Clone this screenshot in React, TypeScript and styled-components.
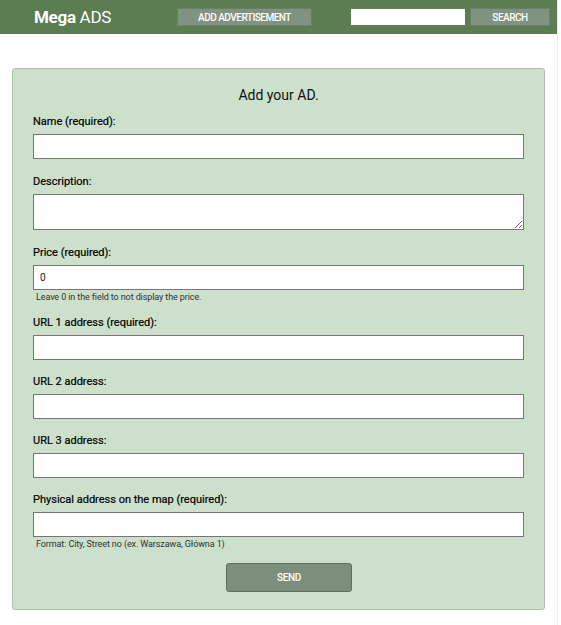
import React from "react";
import styled, { createGlobalStyle } from "styled-components";

const Global = createGlobalStyle`
  html, body { margin: 0; padding: 0; background: #fff; }
  body { font-family: Roboto, "Liberation Sans", Arial, sans-serif; }
  * { box-sizing: border-box; }
`;

const Page = styled.div`
  width: 558px;
  min-height: 625px;
  border-right: 1px solid #ededed;
`;

const Header = styled.header`
  height: 34px;
  background: #5c7c51;
  display: flex;
  align-items: center;
`;

const Logo = styled.div`
  margin-left: 34px;
  font-size: 17px;
  color: #fff;
  letter-spacing: -0.3px;
  width: 143px;
  b { font-weight: 700; }
`;

const HeaderButton = styled.button<{ $w: number; $ml: number }>`
  margin-left: ${(p) => p.$ml}px;
  width: ${(p) => p.$w}px;
  height: 18px;
  padding: 0;
  background: #7f9380;
  border: 1px solid #6c7f6b;
  color: #fff;
  font-family: Roboto, "Liberation Sans", sans-serif;
  font-size: 10px;
  font-weight: 500;
  letter-spacing: -0.5px;
  cursor: pointer;
`;

const SearchInput = styled.input`
  margin-left: 39px;
  width: 114px;
  height: 16px;
  border: none;
  background: #fff;
  padding: 0 4px;
`;

const Panel = styled.main`
  margin: 34px 12px 0 12px;
  width: 533px;
  background: #cde0cc;
  border: 1px solid #b3bcb2;
  border-radius: 3px;
  padding: 18px 20px 17px 20px;
  display: flex;
  flex-direction: column;
`;

const Title = styled.h1`
  margin: 0 0 11px 0;
  font-size: 14px;
  line-height: 17px;
  font-weight: 400;
  color: #111;
  text-align: center;
`;

const Field = styled.div<{ $gap: number }>`
  display: flex;
  flex-direction: column;
  margin-bottom: ${(p) => p.$gap}px;
`;

const Label = styled.label`
  font-size: 11px;
  line-height: 14px;
  font-weight: 400;
  color: #000;
  margin-bottom: 5px;
  -webkit-text-stroke: 0.2px #000;
`;

const TextInput = styled.input`
  width: 491px;
  height: 25px;
  border: 1px solid #767676;
  background: #fff;
  padding: 0 6px;
  font-family: Roboto, "Liberation Sans", sans-serif;
  font-size: 10px;
  color: #222;
  outline: none;
`;

const TextArea = styled.textarea`
  width: 491px;
  height: 36px;
  border: 1px solid #767676;
  background: #fff;
  padding: 4px 6px;
  font-family: Roboto, "Liberation Sans", sans-serif;
  font-size: 10px;
  display: block;
  outline: none;
`;

const Hint = styled.small`
  display: block;
  margin: 2px 0 -10px 3px;
  font-size: 9px;
  line-height: 10px;
  color: #333;
  letter-spacing: -0.1px;
`;

const SendButton = styled.button`
  margin-left: 193px;
  margin-top: -1px;
  align-self: flex-start;
  width: 126px;
  height: 29px;
  background: #7c8f7c;
  border: 1px solid #5e705e;
  border-radius: 3px;
  color: #fff;
  font-family: Roboto, "Liberation Sans", sans-serif;
  font-size: 10px;
  font-weight: 500;
  letter-spacing: -0.3px;
  cursor: pointer;
`;

type FieldDef = { label: string; hint?: string; value?: string; area?: boolean; gap: number };

const fields: FieldDef[] = [
  { label: "Name (required):", gap: 16 },
  { label: "Description:", area: true, gap: 16 },
  { label: "Price (required):", value: "0", hint: "Leave 0 in the field to not display the price.", gap: 24 },
  { label: "URL 1 address (required):", gap: 15 },
  { label: "URL 2 address:", gap: 15 },
  { label: "URL 3 address:", gap: 15 },
  { label: "Physical address on the map (required):", hint: "Format: City, Street no (ex. Warszawa, Główna 1)", gap: 25 },
];

export default function App() {
  return (
    <Page>
      <Global />
      <Header>
        <Logo>
          <b>Mega</b> ADS
        </Logo>
        <HeaderButton $w={135} $ml={0}>ADD ADVERTISEMENT</HeaderButton>
        <SearchInput />
        <HeaderButton $w={80} $ml={5}>SEARCH</HeaderButton>
      </Header>
      <Panel>
        <Title>Add your AD.</Title>
        {fields.map((f, i) => (
          <Field key={i} $gap={f.gap}>
            <Label>{f.label}</Label>
            {f.area ? <TextArea /> : <TextInput defaultValue={f.value} />}
            {f.hint && <Hint>{f.hint}</Hint>}
          </Field>
        ))}
        <SendButton>SEND</SendButton>
      </Panel>
    </Page>
  );
}
